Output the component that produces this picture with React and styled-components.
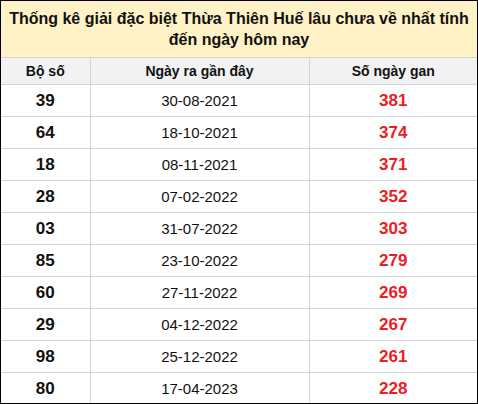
import styled, { createGlobalStyle } from "styled-components"

const GlobalStyle = createGlobalStyle`
    body {
        margin: 0;
        background: #fff;
        font-family: Arial, "Liberation Sans", sans-serif;
    }
`

const Wrapper = styled.div`
    width: 478px;
    height: 404px;
    box-sizing: border-box;
    border: 1px solid #000;
    overflow: hidden;
`

const Table = styled.table`
    width: 100%;
    border-collapse: collapse;
    table-layout: fixed;
`

const Title = styled.th`
    background: #fff2c6;
    color: #111;
    font-size: 16px;
    font-weight: bold;
    line-height: 21px;
    height: 56px;
    padding: 0 2px;
    text-align: center;
    border-bottom: 1px solid #d4d4d4;
`

const HeadCell = styled.th`
    background: #f2f2f2;
    color: #111;
    font-size: 14px;
    font-weight: bold;
    height: 26px;
    padding: 0;
    text-align: center;
    border-bottom: 1px solid #d4d4d4;
    border-left: ${p => (p.$first ? "none" : "1px solid #d4d4d4")};
`

const Cell = styled.td`
    height: 31px;
    padding: 0;
    text-align: center;
    border-bottom: 1px solid #d4d4d4;
    border-left: ${p => (p.$first ? "none" : "1px solid #d4d4d4")};
    font-size: ${p => (p.$bold ? "17px" : "15px")};
    font-weight: ${p => (p.$bold ? "bold" : "normal")};
    color: ${p => p.$color || "#111"};
`

const rows = [
    ["39", "30-08-2021", "381"],
    ["64", "18-10-2021", "374"],
    ["18", "08-11-2021", "371"],
    ["28", "07-02-2022", "352"],
    ["03", "31-07-2022", "303"],
    ["85", "23-10-2022", "279"],
    ["60", "27-11-2022", "269"],
    ["29", "04-12-2022", "267"],
    ["98", "25-12-2022", "261"],
    ["80", "17-04-2023", "228"],
]

function App() {
    return (
        <Wrapper>
            <GlobalStyle />
            <Table>
                <colgroup>
                    <col style={{ width: 89 }} />
                    <col style={{ width: 219 }} />
                    <col />
                </colgroup>
                <thead>
                    <tr>
                        <Title colSpan={3}>
                            Thống kê giải đặc biệt Thừa Thiên Huế lâu chưa về nhất tính đến ngày hôm nay
                        </Title>
                    </tr>
                    <tr>
                        <HeadCell $first>Bộ số</HeadCell>
                        <HeadCell>Ngày ra gần đây</HeadCell>
                        <HeadCell>Số ngày gan</HeadCell>
                    </tr>
                </thead>
                <tbody>
                    {rows.map(([num, date, gan]) => (
                        <tr key={num}>
                            <Cell $first $bold>{num}</Cell>
                            <Cell>{date}</Cell>
                            <Cell $bold $color="#ec1c24">{gan}</Cell>
                        </tr>
                    ))}
                </tbody>
            </Table>
        </Wrapper>
    )
}

export default App
